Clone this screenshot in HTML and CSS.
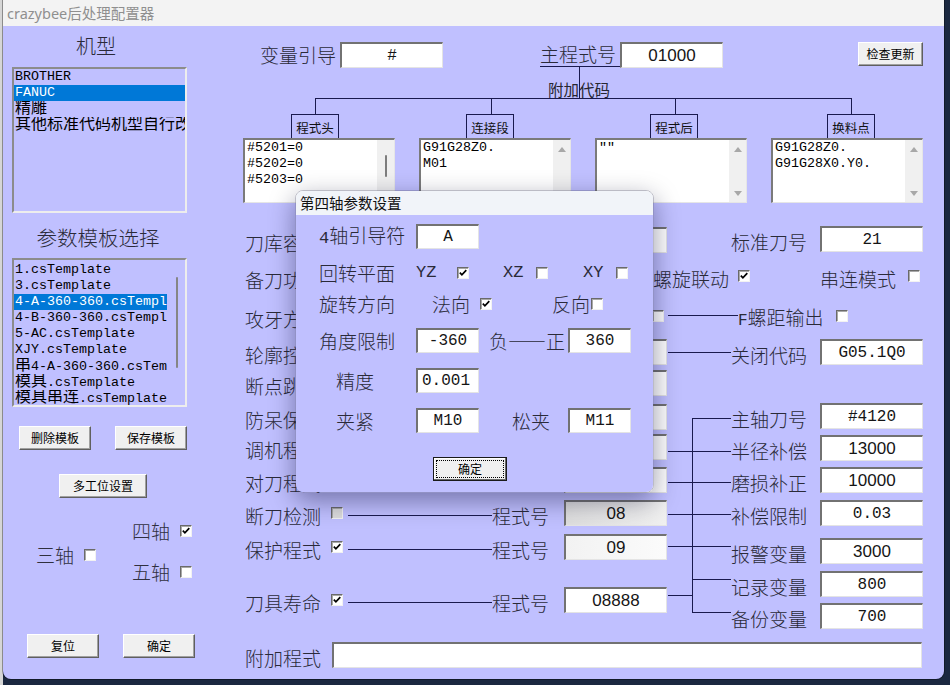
FILE: index.html
```html
<!DOCTYPE html>
<html lang="zh-CN">
<head>
<meta charset="utf-8">
<title>crazybee后处理配置器</title>
<link rel="stylesheet" href="styles.css">
</head>
<body>
<div class="win">
  <div class="titlebar">crazybee后处理配置器</div>
  <div class="client">
    <div class="left">
      <div class="ltitle t1">机型</div>
      <div class="listbox lb1">
        <div class="li">BROTHER</div>
        <div class="li sel">FANUC</div>
        <div class="li"><span class="cj">精雕</span></div>
        <div class="li"><span class="cj">其他标准代码机型自行改</span></div>
      </div>
      <div class="ltitle t2">参数模板选择</div>
      <div class="listbox lb2">
        <div class="items">
          <div class="li">1.csTemplate</div>
          <div class="li">3.csTemplate</div>
          <div class="li sel">4-A-360-360.csTempl</div>
          <div class="li">4-B-360-360.csTempl</div>
          <div class="li">5-AC.csTemplate</div>
          <div class="li">XJY.csTemplate</div>
          <div class="li"><span class="cj">串</span>4-A-360-360.csTem</div>
          <div class="li"><span class="cj">模具</span>.csTemplate</div>
          <div class="li"><span class="cj">模具串连</span>.csTemplate</div>
        </div>
        <div class="vscroll"><span class="thumb"></span></div>
      </div>
      <div class="btnrow r1"><button class="btn">删除模板</button><button class="btn">保存模板</button></div>
      <button class="btn multi">多工位设置</button>
      <div class="axes">
        <div class="axis three"><span class="axl">三轴</span><span class="cb"></span></div>
        <div class="axcol">
          <div class="axis"><span class="axl">四轴</span><span class="cb"><svg viewBox="0 0 8 8"><polyline points="0.8,3.6 2.9,5.8 7.3,1.2"/></svg></span></div>
          <div class="axis"><span class="axl">五轴</span><span class="cb"></span></div>
        </div>
      </div>
      <div class="btnrow r2"><button class="btn">复位</button><button class="btn">确定</button></div>
    </div>

    <div class="right">
      <div class="toprow">
        <span class="lb w80">变量引导</span>
        <span class="tb mono">#</span>
        <span class="lb ul">主程式号</span>
        <span class="tb">01000</span>
        <button class="btn upd">检查更新</button>
      </div>
      <svg class="tree" width="680" height="46" viewBox="0 0 680 46">
        <text x="305" y="28">附加代码</text>
        <path d="M336.5 -2V30.5 M72 30.5H609 M72.5 30V46 M248.5 30V46 M432.5 30V46 M608.5 30V46"/>
      </svg>
      <div class="codes">
        <div class="cg cg1">
          <div class="tab">程式头</div>
          <div class="ta"><div class="tx">#5201=0<br>#5202=0<br>#5203=0</div><div class="sb sb-thumb"><span class="thumb"></span></div></div>
        </div>
        <div class="cg cg2">
          <div class="tab">连接段</div>
          <div class="ta"><div class="tx">G91G28Z0.<br>M01</div><div class="sb"><span class="up"></span><span class="dn"></span></div></div>
        </div>
        <div class="cg cg3">
          <div class="tab">程式后</div>
          <div class="ta"><div class="tx">""</div><div class="sb"><span class="up"></span><span class="dn"></span></div></div>
        </div>
        <div class="cg cg4">
          <div class="tab">换料点</div>
          <div class="ta"><div class="tx">G91G28Z0.<br>G91G28X0.Y0.</div><div class="sb"><span class="up"></span><span class="dn"></span></div></div>
        </div>
      </div>

      <div class="mid">
        <div class="mleft">
          <div class="row"><span class="lb">刀库容量</span><span class="tb mono">24</span></div>
          <div class="row"><span class="lb">备刀功能</span></div>
          <div class="row"><span class="lb">攻牙方式</span><span class="cb cb-end"></span></div>
          <div class="row"><span class="lb">轮廓控制</span><span class="tb mono">G05.1Q1</span></div>
          <div class="row"><span class="lb">断点跳转</span><span class="tb"></span></div>
          <div class="row"><span class="lb">防呆保护</span><span class="tb"></span></div>
          <div class="row"><span class="lb">调机程式</span><span class="tb"></span></div>
          <div class="row"><span class="lb">对刀程式</span><span class="tb"></span></div>
          <div class="row"><span class="lb">断刀检测</span><span class="cb cb-m cb-dis"></span><span class="hline"></span><span class="lb">程式号</span><span class="tb tb-m tb-dis">08</span></div>
          <div class="row"><span class="lb">保护程式</span><span class="cb cb-m"><svg viewBox="0 0 8 8"><polyline points="0.8,3.6 2.9,5.8 7.3,1.2"/></svg></span><span class="hline"></span><span class="lb">程式号</span><span class="tb tb-m tb-soft">09</span></div>
          <div class="row"><span class="lb">刀具寿命</span><span class="cb cb-m"><svg viewBox="0 0 8 8"><polyline points="0.8,3.6 2.9,5.8 7.3,1.2"/></svg></span><span class="hline"></span><span class="lb">程式号</span><span class="tb tb-m">08888</span></div>
        </div>
        <svg class="conn" width="64" height="403" viewBox="0 0 64 403">
          <path d="M1 89.5H71 M1 126.5H64 M25.5 192V387 M25 192.5H64 M1 225.5H64 M1 256.5H64 M1 288.5H64 M1 320.5H64 M25 353.5H64 M1 369.5H25 M25 386.5H64"/>
        </svg>
        <div class="mright">
          <div class="row"><span class="lb">标准刀号</span><span class="tb mono">21</span></div>
          <div class="row spiral"><span class="lb sp-l">螺旋联动</span><span class="cb cb-s"><svg viewBox="0 0 8 8"><polyline points="0.8,3.6 2.9,5.8 7.3,1.2"/></svg></span><span class="lb serial">串连模式</span><span class="cb cb-r"></span></div>
          <div class="row pitch"><span class="lb pt-l"><span class="lat">F</span>螺距输出</span><span class="cb cb-p"></span></div>
          <div class="row"><span class="lb">关闭代码</span><span class="tb mono">G05.1Q0</span></div>
          <div class="row"><span class="lb">主轴刀号</span><span class="tb mono">#4120</span></div>
          <div class="row"><span class="lb">半径补偿</span><span class="tb">13000</span></div>
          <div class="row"><span class="lb">磨损补正</span><span class="tb">10000</span></div>
          <div class="row"><span class="lb">补偿限制</span><span class="tb mono">0.03</span></div>
          <div class="row"><span class="lb">报警变量</span><span class="tb">3000</span></div>
          <div class="row"><span class="lb">记录变量</span><span class="tb mono">800</span></div>
          <div class="row"><span class="lb">备份变量</span><span class="tb mono">700</span></div>
        </div>
      </div>

      <div class="extra"><span class="lb">附加程式</span><span class="tb tb-wide"></span></div>
    </div>
  </div>
</div>

<div class="dlg">
  <div class="dtitle">第四轴参数设置</div>
  <div class="dclient">
    <div class="drow"><span class="dl"><span class="lat">4</span>轴引导符</span><span class="tb dw mono">A</span></div>
    <div class="drow"><span class="dl">回转平面</span><span class="opt o-yz lat">YZ</span><span class="cb"><svg viewBox="0 0 8 8"><polyline points="0.8,3.6 2.9,5.8 7.3,1.2"/></svg></span><span class="opt o-xz lat">XZ</span><span class="cb"></span><span class="opt o-xy lat">XY</span><span class="cb"></span></div>
    <div class="drow"><span class="dl">旋转方向</span><span class="opt o-fx">法向</span><span class="cb"><svg viewBox="0 0 8 8"><polyline points="0.8,3.6 2.9,5.8 7.3,1.2"/></svg></span><span class="opt o-rx">反向</span><span class="cb"></span></div>
    <div class="drow"><span class="dl">角度限制</span><span class="tb dw mono">-360</span><span class="opt o-pm">负——正</span><span class="tb dw mono">360</span></div>
    <div class="drow"><span class="dl ind">精度</span><span class="tb dw mono tb-left">0.001</span></div>
    <div class="drow"><span class="dl ind">夹紧</span><span class="tb dw mono">M10</span><span class="opt o-sj">松夹</span><span class="tb dw mono">M11</span></div>
    <div class="drow"><button class="btn dok"><span class="focus">确定</span></button></div>
  </div>
</div>
</body>
</html>
```

FILE: styles.css
```css
* { box-sizing: border-box; }
html, body { margin: 0; padding: 0; }
body {
  width: 950px;
  height: 685px;
  overflow: hidden;
  position: relative;
  background: linear-gradient(90deg, #d6d6d6 0 3px, #1b2840 3px);
  font-family: "Noto Sans CJK SC", sans-serif;
  color: #262630;
}

/* main window */
.win {
  position: absolute;
  left: 3px;
  top: 0;
  width: 941px;
  height: 679px;
  border-radius: 0 0 8px 8px;
  overflow: hidden;
  box-shadow: 0 0 0 1px rgba(0, 0, 0, 0.35);
  display: flex;
  flex-direction: column;
}
.titlebar {
  height: 26px;
  flex: none;
  background: #f3f3f3;
  color: #8f8f8f;
  font: 14.5px/26px "Noto Sans", "Noto Sans CJK SC", sans-serif;
  padding-left: 4px;
}
.client {
  flex: 1;
  background: #c0c0ff;
  display: flex;
}

/* left panel */
.left {
  width: 240px;
  flex: none;
  padding: 8px 0 0 9px;
  display: flex;
  flex-direction: column;
  align-items: flex-start;
}
.ltitle {
  width: 175px;
  text-align: center;
  font-size: 20px;
  line-height: 24px;
  color: #2a2a38;
  font-weight: 300;
}
.t1 { padding-right: 7px; }
.t2 { margin-top: 12px; padding-right: 3px; font-size: 20.5px; }
.listbox {
  width: 175px;
  margin-top: 9px;
  border: 2px solid;
  border-color: #8c8c8c #ededed #ededed #8c8c8c;
  background: #c0c0ff;
  overflow: hidden;
  font: 13.33px/16px "Liberation Mono", "Noto Sans CJK SC", monospace;
  color: #000;
  white-space: nowrap;
}
.lb1 { height: 146px; }
.lb2 { height: 149px; display: flex; }
.items { width: 153px; flex: none; padding-top: 2px; overflow: hidden; }
.li { height: 16px; padding-left: 1px; overflow: hidden; }
.li.sel { background: #0078d7; color: #fff; }
.cj { font-size: 16px; line-height: 16px; }
.vscroll { flex: 1; }
.vscroll .thumb {
  display: block;
  width: 2px;
  height: 91px;
  margin: 17px 0 0 9px;
  background: #858585;
  border-radius: 1px;
}

/* buttons */
.btn {
  height: 24px;
  padding: 0;
  font: 12px/22px "Noto Sans CJK SC", sans-serif;
  color: #000;
  background: #f0f0f0;
  border: 1px solid;
  border-color: #fff #5f5f5f #5f5f5f #fff;
  box-shadow: inset -1px -1px #a0a0a0;
  flex: none;
}
.btnrow { display: flex; gap: 24px; }
.btnrow .btn { width: 72px; }
.r1 { margin: 19px 0 0 7px; }
.r2 { margin: 51px 0 0 15px; }
.multi { width: 88px; margin: 24px 0 0 47px; }

/* axes */
.axes { display: flex; margin: 22px 0 0 24px; }
.axis { display: flex; align-items: center; height: 22px; }
.three { margin-top: 24px; }
.three .cb { margin-left: 10px; }
.axcol { display: flex; flex-direction: column; gap: 19px; margin-left: 36px; }
.axcol .cb { margin-left: 10px; }
.axl { width: 38px; font-size: 19px; line-height: 22px; color: #30303e; font-weight: 300; }

/* checkbox */
.cb {
  width: 12px;
  height: 12px;
  flex: none;
  background: #fff;
  border: 1px solid;
  border-color: #6a6a6a #f2f2f2 #f2f2f2 #6a6a6a;
  box-shadow: inset 1px 1px #a8a8a8;
  display: flex;
  align-items: center;
  justify-content: center;
}
.cb svg { width: 8px; height: 8px; overflow: visible; }
.cb polyline { fill: none; stroke: #000; stroke-width: 1.7; }
.cb-dis { background: #dcdcdc; }

/* text boxes */
.tb {
  width: 103px;
  height: 26px;
  flex: none;
  display: flex;
  align-items: center;
  justify-content: center;
  background: #fff;
  border-style: solid;
  border-width: 2px 1px 1px 2px;
  border-color: #727272 #e4e4e4 #e4e4e4 #727272;
  font: 17px "Liberation Sans", sans-serif;
  color: #151515;
  white-space: nowrap;
  overflow: hidden;
}
.mono { font: 16px "Liberation Mono", monospace; }
.tb-left { justify-content: flex-start; padding-left: 4px; }
.tb-dis { background: linear-gradient(90deg, #dedede, #f0f0f0); }
.tb-soft { background: linear-gradient(90deg, #f2f2f2, #fbfbfb); }

/* labels */
.lb {
  font-size: 19px;
  line-height: 26px;
  color: #2a2a38;
  font-weight: 300;
  white-space: nowrap;
  flex: none;
}
.lat { font-family: "Liberation Mono", monospace; font-size: 16px; }

/* right panel */
.right {
  width: 680px;
  flex: none;
  padding-top: 16px;
  display: flex;
  flex-direction: column;
}
.toprow {
  display: flex;
  align-items: center;
  height: 26px;
  padding-left: 17px;
}
.w80 { width: 80px; }
.ul {
  width: 80px;
  height: 25px;
  line-height: 24px;
  margin-left: 97px;
  align-self: flex-start;
  border-bottom: 1px solid #1a1a4e;
}
.upd { width: 65px; margin-left: auto; align-self: flex-start; }

.tree { display: block; overflow: visible; flex: none; }
.tree text { font: 15.5px "Noto Sans CJK SC", sans-serif; fill: #262630; }
.tree path { fill: none; stroke: #1a1a4e; stroke-width: 1; }

.codes { display: flex; justify-content: space-between; }
.cg { width: 152px; display: flex; flex-direction: column; }
.tab {
  width: 48px;
  height: 24px;
  border: 1px solid #1a1a4e;
  border-bottom: none;
  font: 12.5px/25px "Noto Sans CJK SC", sans-serif;
  color: #111;
  text-align: center;
}
.cg1 .tab { margin-left: 48px; }
.cg2 .tab { margin-left: 47px; }
.cg3 .tab { margin-left: 55px; }
.cg4 .tab { margin-left: 56px; }
.ta {
  height: 65px;
  display: flex;
  background: #fff;
  border-style: solid;
  border-width: 2px 1px 1px 2px;
  border-color: #7a7a7a #e6e6e6 #e6e6e6 #7a7a7a;
}
.tx {
  flex: 1;
  padding: 0 2px;
  font: 13.33px/16px "Liberation Mono", monospace;
  color: #000;
  white-space: nowrap;
  overflow: hidden;
}
.sb {
  width: 17px;
  flex: none;
  background: #f0f0f0;
  display: flex;
  flex-direction: column;
  align-items: center;
  justify-content: space-between;
  padding: 7px 0 6px;
}
.sb-thumb { justify-content: flex-start; }
.sb .thumb { width: 2px; height: 22px; margin-top: 8px; background: #7d7d7d; border-radius: 1px; }
.up, .dn {
  width: 0;
  height: 0;
  border-left: 4px solid transparent;
  border-right: 4px solid transparent;
}
.up { border-bottom: 5px solid #a8a8a8; }
.dn { border-top: 5px solid #a8a8a8; }

/* middle section */
.mid { display: flex; margin-top: 23px; height: 403px; }
.row { display: flex; align-items: center; height: 26px; }
.mid .lb { padding-top: 5px; line-height: 26px; }
.mleft {
  width: 424px;
  flex: none;
  display: grid;
  grid-template-rows: 37px 39px 36px 31px 34px 30px 33px 33px 34px 53px 26px;
  align-content: start;
  padding-top: 1px;
}
.mleft .row { padding-left: 2px; }
.mleft .row > .tb { margin-left: auto; }
.mleft .row > .tb-m { margin-left: 15px; }
.cb-end { margin-left: auto; margin-right: 3px; }
.cb-m { margin-left: 10px; }
.hline {
  flex: 1;
  height: 0;
  margin: 5px 0 0 5px;
  border-top: 1px solid #1a1a4e;
}
.conn { width: 64px; height: 403px; flex: none; overflow: visible; }
.conn path { fill: none; stroke: #1a1a4e; stroke-width: 1; }
.mright {
  width: 192px;
  flex: none;
  display: grid;
  grid-template-rows: 37px 40px 36px 64px 32px 32px 33px 38px 33px 32px 26px;
  align-content: start;
}
.mright .row > .lb { width: 79px; }
.mright .row > .tb { margin-left: auto; }
.spiral { margin-left: -78px; }
.mright .row > .sp-l { width: 77px; }
.cb-s { margin-left: 8px; }
.mright .row > .serial { width: 78px; margin-left: 70px; }
.cb-r { margin-left: 10px; }
.pitch { margin-left: 7px; }
.mright .row > .pt-l { width: 89px; }
.cb-p { margin-left: 9px; }

.extra {
  display: flex;
  align-items: center;
  height: 26px;
  margin-top: 13px;
  padding-left: 2px;
}
.extra .lb { padding-top: 5px; }
.tb-wide { width: 590px; margin-left: auto; margin-right: 1px; }

/* dialog */
.dlg {
  position: absolute;
  left: 295px;
  top: 190px;
  width: 359px;
  height: 303px;
  border-radius: 8px;
  overflow: hidden;
  border: 1px solid rgba(60, 60, 90, 0.35);
  box-shadow: 0 8px 26px rgba(0, 0, 40, 0.4);
  display: flex;
  flex-direction: column;
}
.dtitle {
  height: 24px;
  flex: none;
  background: #f1f4f9;
  color: #111;
  font: 14.5px/24px "Noto Sans CJK SC", sans-serif;
  padding-left: 4px;
}
.dclient {
  flex: 1;
  background: #c0c0ff;
  padding: 9px 0 0 23px;
  display: grid;
  grid-template-rows: 36px 31px 37px 40px 40px 48px 24px;
  align-content: start;
}
.drow { display: flex; align-items: center; height: 25px; }
.dl {
  width: 97px;
  flex: none;
  font-size: 19px;
  line-height: 25px;
  font-weight: 300;
  color: #2a2a38;
  white-space: nowrap;
}
.dl .lat { font-size: 17px; }
.ind { padding-left: 17px; }
.dw { width: 63px; height: 25px; }
.opt {
  flex: none;
  font-size: 19px;
  line-height: 25px;
  font-weight: 300;
  color: #2a2a38;
  white-space: nowrap;
}
.opt.lat { font-size: 17px; }
.o-yz { width: 41px; }
.o-xz { width: 33px; margin-left: 34px; }
.o-xy { width: 33px; margin-left: 35px; }
.o-fx { width: 48px; margin-left: 16px; }
.o-rx { width: 39px; margin-left: 60px; }
.o-pm { width: 79px; margin-left: 10px; }
.o-sj { width: 56px; margin-left: 33px; }
.dok {
  width: 74px;
  margin-left: 114px;
  border: 1px solid #1a1a1a;
  box-shadow: inset -1px -1px #6a6a6a, inset 1px 1px #fff;
  padding: 2px;
  display: flex;
}
.focus {
  flex: 1;
  border: 1px dotted #000;
  line-height: 16px;
  text-align: center;
}
```
